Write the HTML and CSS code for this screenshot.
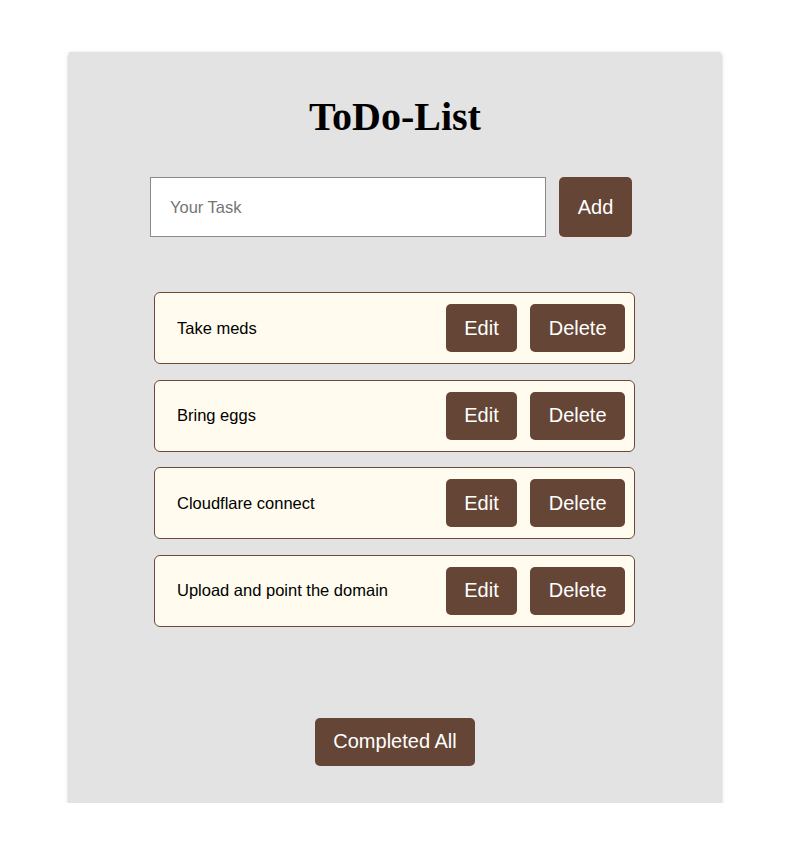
FILE: index.html
```html
<!DOCTYPE html>
<html>
<head>
<meta charset="utf-8">
<link rel="stylesheet" href="styles.css">
</head>
<body>
<div class="app">
  <h1 class="title">ToDo-List</h1>
  <div class="entry">
    <input class="task-input" type="text" placeholder="Your Task">
    <button class="btn add-btn">Add</button>
  </div>
  <ul class="tasks">
    <li class="task"><span class="task-text">Take meds</span><div class="actions"><button class="btn">Edit</button><button class="btn">Delete</button></div></li>
    <li class="task"><span class="task-text">Bring eggs</span><div class="actions"><button class="btn">Edit</button><button class="btn">Delete</button></div></li>
    <li class="task"><span class="task-text">Cloudflare connect</span><div class="actions"><button class="btn">Edit</button><button class="btn">Delete</button></div></li>
    <li class="task"><span class="task-text">Upload and point the domain</span><div class="actions"><button class="btn">Edit</button><button class="btn">Delete</button></div></li>
  </ul>
  <div class="footer">
    <button class="btn complete-btn">Completed All</button>
  </div>
</div>
</body>
</html>
```
FILE: styles.css
```css
* { box-sizing: border-box; }
html, body { margin: 0; padding: 0; background: #ffffff; }
body { font-family: "Liberation Sans", Arial, sans-serif; }

.app {
  width: 652px;
  margin: 52px 0 0 69px;
  background: #e3e3e3;
  box-shadow: 0 2px 4px rgba(0,0,0,0.3);
  padding: 42px 0 37px;
  display: flex;
  flex-direction: column;
}

.title {
  margin: 0;
  font-family: "Liberation Serif", "Times New Roman", serif;
  font-weight: bold;
  font-size: 40px;
  line-height: 46px;
  text-align: center;
  color: #000;
}

.entry {
  margin-top: 37px;
  padding-left: 81px;
  display: flex;
  gap: 13px;
}

.task-input {
  width: 396px;
  height: 60px;
  border: 1px solid #8a8a8a;
  background: #fff;
  padding: 0 19px;
  font-family: "Liberation Sans", Arial, sans-serif;
  font-size: 16.5px;
  color: #000;
  outline: none;
}
.task-input::placeholder { color: #757575; }

.btn {
  background: #654535;
  color: #fff;
  border: none;
  border-radius: 5px;
  font-family: "Liberation Sans", Arial, sans-serif;
  font-size: 20px;
  padding: 0 18.5px;
  height: 48px;
  cursor: pointer;
}

.add-btn { height: 60px; width: 73px; padding: 0; }

.tasks {
  list-style: none;
  margin: 55px 0 0 85px;
  padding: 0;
  width: 481px;
  display: flex;
  flex-direction: column;
  gap: 15.5px;
}

.task {
  display: flex;
  align-items: center;
  justify-content: space-between;
  height: 72px;
  background: #fffcef;
  border: 1px solid #6b4a3a;
  border-radius: 6px;
  padding: 0 9px 0 22px;
}

.task-text {
  font-size: 16.5px;
  color: #000;
}

.actions {
  display: flex;
  gap: 13px;
}

.footer {
  margin-top: 91px;
  display: flex;
  justify-content: center;
}
```
